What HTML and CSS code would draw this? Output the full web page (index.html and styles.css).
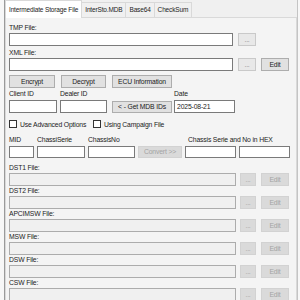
FILE: index.html
```html
<html>
	<head>
		<title>Intermediate Storage File</title>
		<link rel="stylesheet" href="styles.css">
	</head>
	<body>
		<div class="desk">
			<div class="side-left"></div>

			<div class="window">
				<div class="tab-strip">
					<div class="tab tab-active">Intermediate Storage File</div>
					<div class="tab">InterSto.MDB</div>
					<div class="tab">Base64</div>
					<div class="tab">CheckSum</div>
				</div>

				<div class="tab-page">
					<div class="block block-tmp">
						<div class="lbl">TMP File:</div>
						<div class="file-row">
							<div class="box box-top"></div>
							<div class="btn btn-pale btn-dots">...</div>
						</div>
					</div>

					<div class="block block-xml">
						<div class="lbl">XML File:</div>
						<div class="file-row">
							<div class="box box-top"></div>
							<div class="btn btn-pale btn-dots">...</div>
							<div class="btn btn-edit">Edit</div>
						</div>
					</div>

					<div class="btn-row">
						<div class="btn btn-encrypt">Encrypt</div>
						<div class="btn btn-decrypt">Decrypt</div>
						<div class="btn btn-ecu">ECU Information</div>
					</div>

					<div class="id-row">
						<div class="col col-client">
							<div class="lbl">Client ID</div>
							<div class="box"></div>
						</div>
						<div class="col col-dealer">
							<div class="lbl">Dealer ID</div>
							<div class="box"></div>
						</div>
						<div class="col col-getids">
							<div class="btn btn-getids">&lt; - Get MDB IDs</div>
						</div>
						<div class="col col-date">
							<div class="lbl">Date</div>
							<div class="box box-text">2025-08-21</div>
						</div>
					</div>

					<div class="check-row">
						<label class="check check-adv"><span class="check-box"></span>Use Advanced Options</label>
						<label class="check"><span class="check-box"></span>Using Campaign File</label>
					</div>

					<div class="chassis">
						<div class="lbl">MID</div>
						<div class="lbl">ChassiSerie</div>
						<div class="lbl">ChassisNo</div>
						<div class="lbl"></div>
						<div class="lbl lbl-hex">Chassis Serie and No in HEX</div>

						<div class="box"></div>
						<div class="box"></div>
						<div class="box"></div>
						<div class="btn btn-off">Convert &gt;&gt;</div>
						<div class="box"></div>
						<div class="box"></div>
					</div>

					<div class="files">
						<div class="block">
							<div class="lbl">DST1 File:</div>
							<div class="file-row">
								<div class="box box-off"></div>
								<div class="btn btn-off btn-dots">...</div>
								<div class="btn btn-off btn-edit">Edit</div>
							</div>
						</div>
						<div class="block">
							<div class="lbl">DST2 File:</div>
							<div class="file-row">
								<div class="box box-off"></div>
								<div class="btn btn-off btn-dots">...</div>
								<div class="btn btn-off btn-edit">Edit</div>
							</div>
						</div>
						<div class="block">
							<div class="lbl">APCIMSW File:</div>
							<div class="file-row">
								<div class="box box-off"></div>
								<div class="btn btn-off btn-dots">...</div>
								<div class="btn btn-off btn-edit">Edit</div>
							</div>
						</div>
						<div class="block">
							<div class="lbl">MSW File:</div>
							<div class="file-row">
								<div class="box box-off"></div>
								<div class="btn btn-off btn-dots">...</div>
								<div class="btn btn-off btn-edit">Edit</div>
							</div>
						</div>
						<div class="block">
							<div class="lbl">DSW File:</div>
							<div class="file-row">
								<div class="box box-off"></div>
								<div class="btn btn-off btn-dots">...</div>
								<div class="btn btn-off btn-edit">Edit</div>
							</div>
						</div>
						<div class="block">
							<div class="lbl">CSW File:</div>
							<div class="file-row">
								<div class="box box-off"></div>
								<div class="btn btn-off btn-dots">...</div>
								<div class="btn btn-off btn-edit">Edit</div>
							</div>
						</div>
					</div>
				</div>
			</div>

			<div class="side-right"></div>
		</div>
	</body>
</html>
```

FILE: styles.css
```css
* {
	box-sizing: border-box;
}

body {
	margin: 0;
	width: 300px;
	height: 300px;
	overflow: hidden;
	background: #f0f0f0;
	font-family: "Liberation Sans", Arial, sans-serif;
	font-size: 6.8px;
	letter-spacing: -0.15px;
	color: #222;
}

.desk {
	display: flex;
	height: 300px;
}

.side-left {
	width: 5px;
	background: #f7f7f7;
	border-right: 1px solid #9a9a9a;
}

.side-right {
	width: 3px;
	background: #f7f7f7;
	border-left: 1px solid #c4c4c4;
}

.window {
	flex: 1;
	display: flex;
	flex-direction: column;
	background: #f0f0f0;
}

/* tabs */
.tab-strip {
	display: flex;
	align-items: flex-end;
	height: 18px;
	font-size: 6.5px;
}

.tab {
	height: 15px;
	line-height: 14px;
	padding: 0 3px;
	background: #f0f0f0;
	border: 1px solid #d9d9d9;
	border-bottom: none;
	margin-left: -1px;
}

.tab-active {
	height: 18px;
	line-height: 18px;
	margin-left: 0;
	padding: 0 3px;
	background: #fff;
	position: relative;
	z-index: 1;
	margin-bottom: -1px;
}

.tab-page {
	flex: 1;
	border: 1px solid #d9d9d9;
	background: #f4f4f4;
	padding: 4px 0 0 3px;
}

/* common pieces */
.lbl {
	height: 10px;
	line-height: 10px;
	white-space: nowrap;
}

.box {
	height: 13px;
	background: #fff;
	border: 1px solid #7a7a7a;
}

.box-text {
	line-height: 11px;
	padding-left: 2px;
}

.box-off {
	background: #f0f0f0;
	border-color: #acacac;
}

.btn {
	height: 13px;
	line-height: 11px;
	text-align: center;
	white-space: nowrap;
	background: #e1e1e1;
	border: 1px solid #adadad;
}

.btn-pale {
	background: #e8e8e8;
	border-color: #c9c9c9;
	color: #8a8a8a;
}

.btn-off {
	background: #dadada;
	border-color: #d2d2d2;
	color: #a3a3a3;
}

/* file rows */
.block-tmp {
	margin-top: 1px;
}

.block-xml {
	margin-top: 2px;
}

.file-row {
	display: flex;
}

.file-row .box {
	width: 224px;
}

.btn-dots {
	width: 18px;
	margin-left: 5px;
}

.btn-edit {
	width: 28px;
	margin-left: 5px;
}

.files {
	margin-top: 5px;
}

.files .box {
	width: 227px;
}

.files .btn-dots {
	width: 16px;
	margin-left: 4px;
}

/* encrypt buttons */
.btn-row {
	display: flex;
	margin-top: 4px;
}

.btn-encrypt {
	width: 46px;
}

.btn-decrypt {
	width: 45px;
	margin-left: 6px;
}

.btn-ecu {
	width: 60px;
	margin-left: 6px;
}

/* ids */
.id-row {
	display: flex;
	margin-top: 1px;
}

.col {
	display: flex;
	flex-direction: column;
	justify-content: flex-end;
}

.col .lbl {
	margin-bottom: 1px;
}

.col-client {
	width: 48px;
}

.col-dealer {
	width: 47px;
	margin-left: 3px;
}

.col-getids {
	width: 60px;
	margin-left: 5px;
}

.btn-getids {
	height: 12px;
	line-height: 10px;
}

.col-date {
	width: 61px;
	margin-left: 2px;
}

/* checkboxes */
.check-row {
	display: flex;
	margin-top: 6px;
	height: 10px;
	align-items: center;
}

.check {
	display: flex;
	align-items: center;
}

.check-adv {
	width: 84px;
}

.check-box {
	width: 8px;
	height: 8px;
	border: 1px solid #333;
	background: #fff;
	margin-right: 3px;
}

/* chassis */
.chassis {
	display: grid;
	grid-template-columns: 25px 48px 47px 44px 51px 51px;
	grid-template-rows: 10px 12px;
	column-gap: 3px;
	row-gap: 1px;
	margin-top: 6px;
}

.chassis .box,
.chassis .btn {
	height: 12px;
	line-height: 10px;
}

.lbl-hex {
	grid-column: 5 / 7;
	padding-left: 3px;
}
```
